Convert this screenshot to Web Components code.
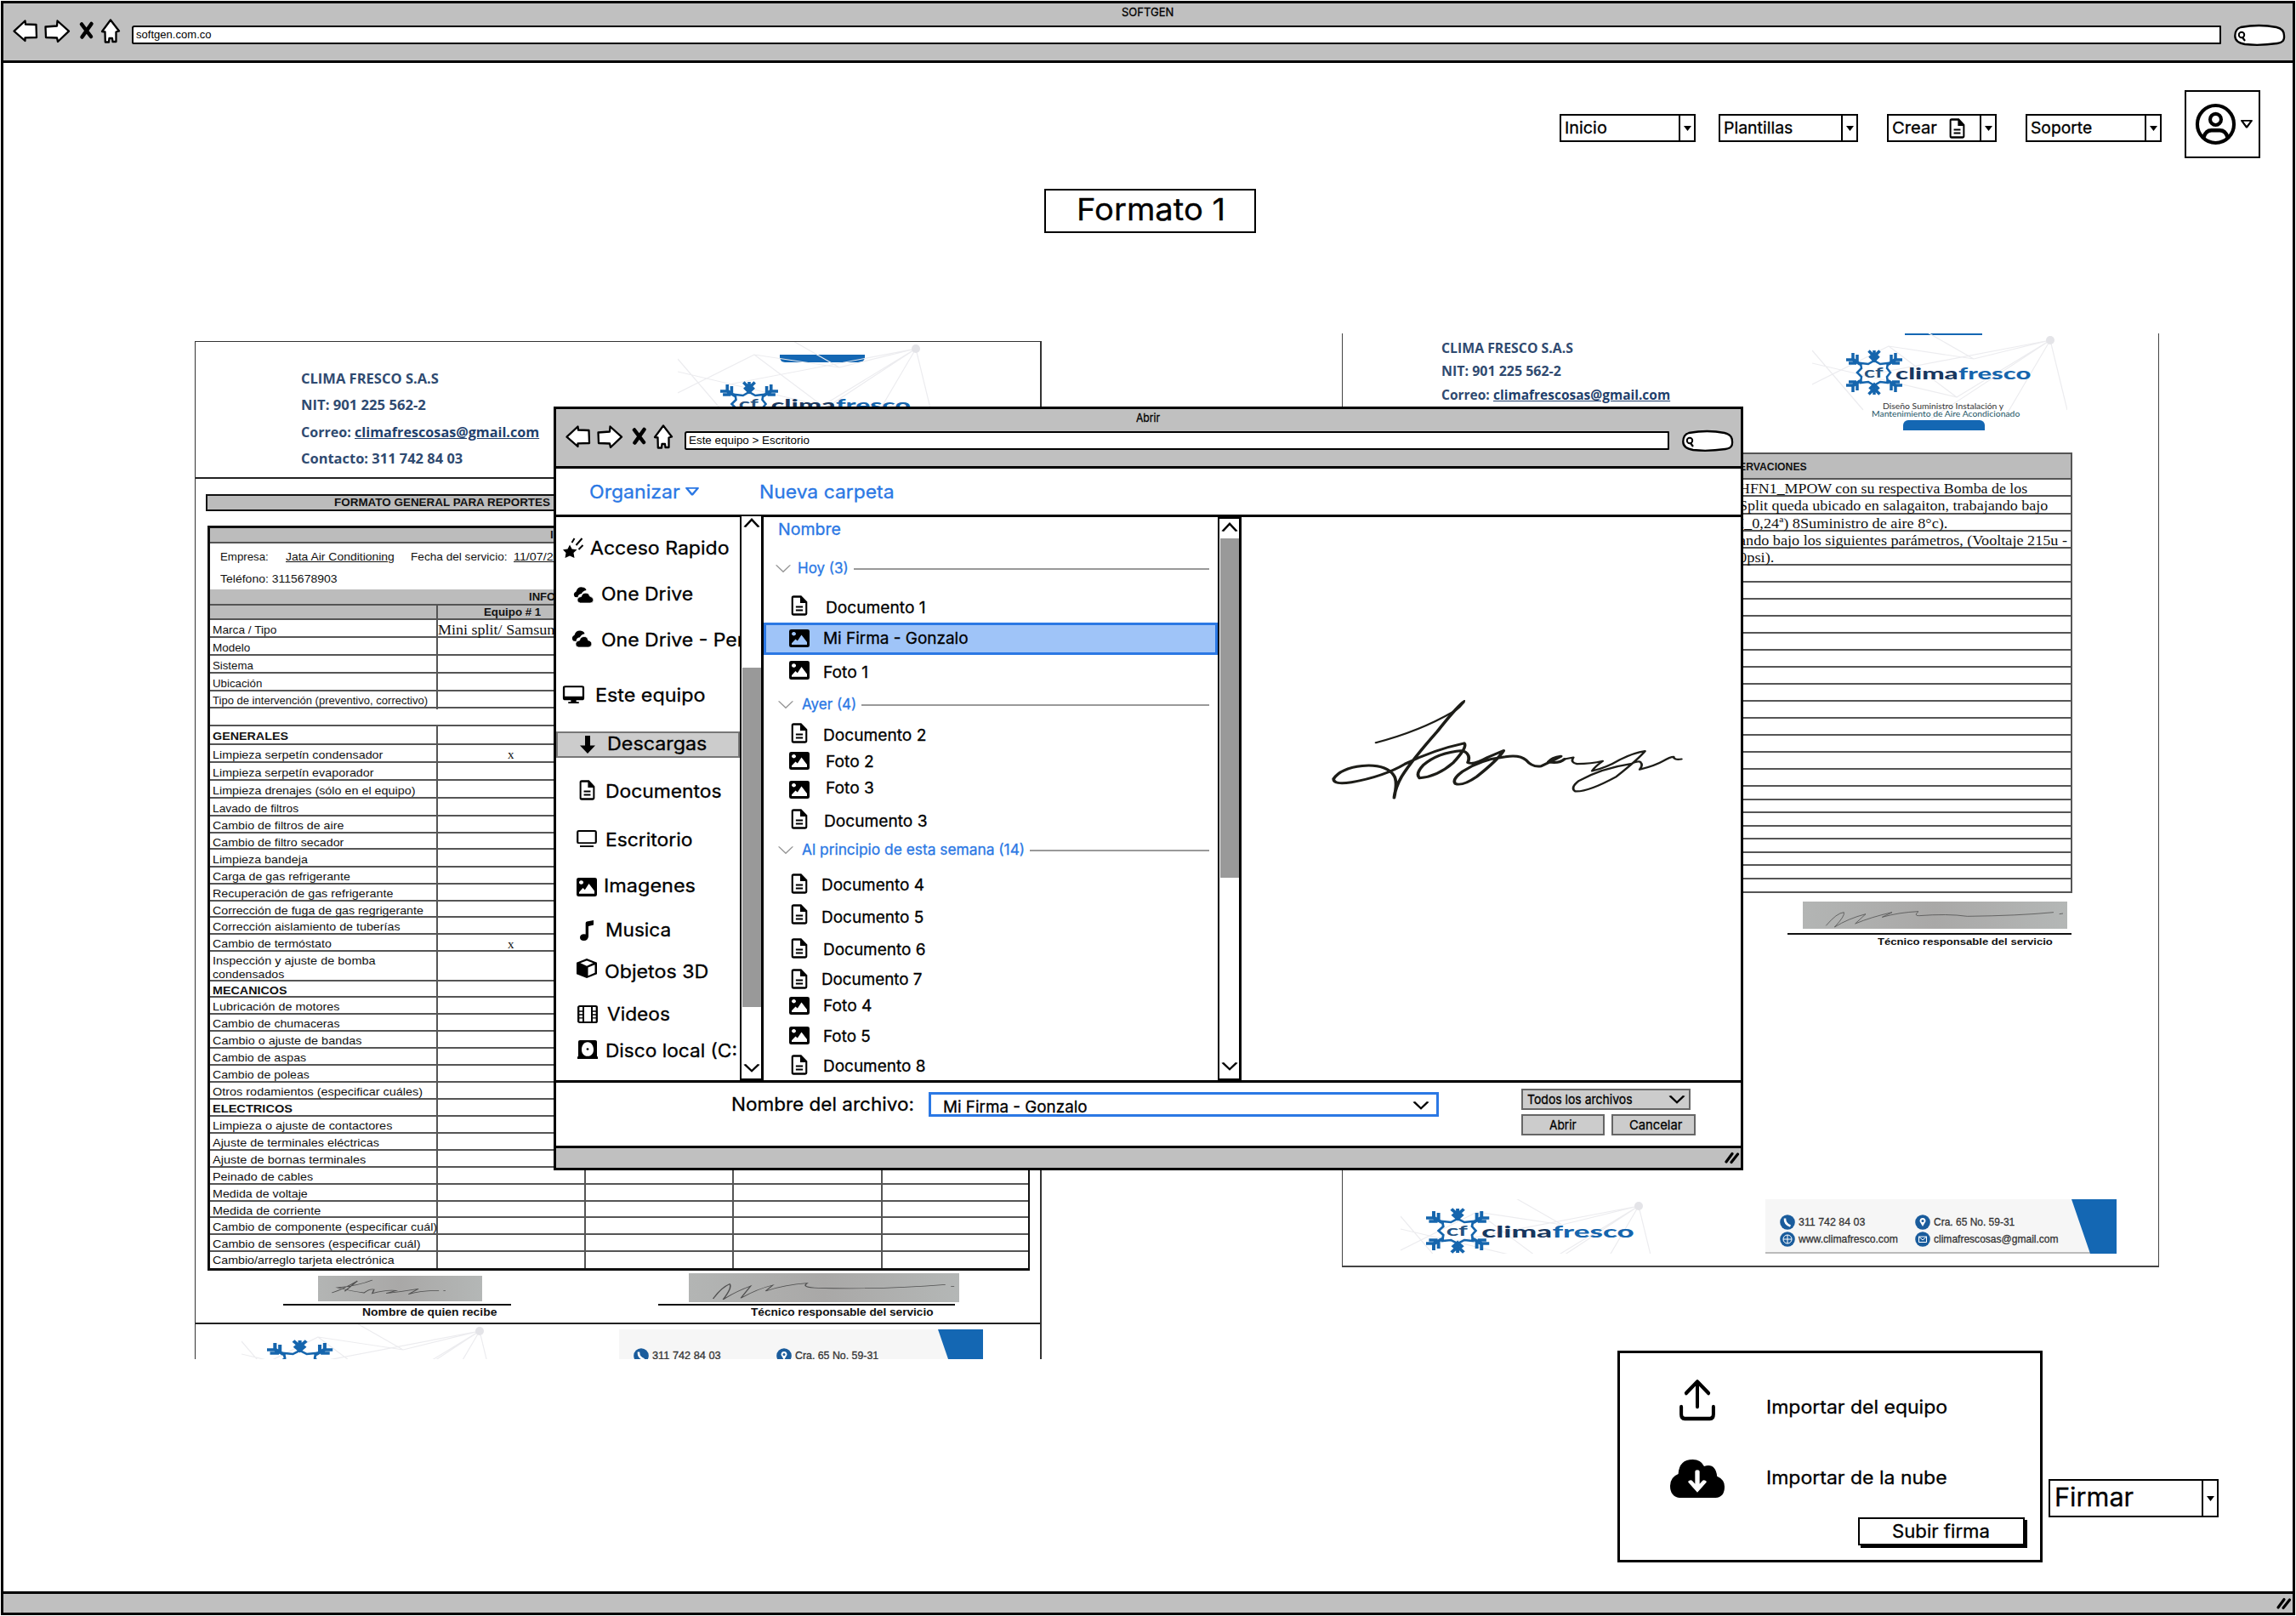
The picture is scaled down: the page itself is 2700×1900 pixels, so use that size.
<!DOCTYPE html>
<html lang="es">
<head>
<meta charset="utf-8">
<title>SOFTGEN</title>
<style>
html,body{margin:0;padding:0;background:#fff}
body{width:2700px;height:1900px;overflow:hidden;color:#000}
</style>
</head>
<body>
<soft-app></soft-app>
<script>
const define = (name, css, html, after) => customElements.define(name, class extends HTMLElement {
  connectedCallback() {
    if (this.shadowRoot) return;
    const root = this.attachShadow({ mode: 'open' });
    root.innerHTML = `<style>*{box-sizing:border-box}svg{display:block;flex:none;overflow:visible}${css}</style>` +
      (typeof html === 'function' ? html(this) : html);
    if (after) after(this, root);
  }
});

/* A single line of text condensed or widened to a given width. */
const FONTS = {
  h: 'Inter,"Noto Sans",sans-serif',
  a: '"Liberation Sans",Arial,sans-serif',
  s: '"Liberation Serif","Times New Roman",serif',
  l: 'Lato,"Open Sans",sans-serif',
  o: '"Open Sans","Noto Sans",sans-serif'
};
define('fit-text',
  `:host{display:block;flex:none;white-space:nowrap;font-feature-settings:"cv11","cv08"}
   span{display:inline-block;transform-origin:0 50%;vertical-align:top}`,
  '<span><slot></slot></span>',
  (el, root) => {
    const g = (k, d) => el.getAttribute(k) || d;
    const h = g('h', 24), f = g('f', 'h');
    el.style.cssText += `;font:${g('b', 400)} ${g('s', 19)}px/${h}px ${FONTS[f]};width:${g('w', 100)}px;height:${h}px`;
    if (f === 'h') el.style.webkitTextStroke = '.3px currentColor';
    const span = root.querySelector('span');
    const real = span.offsetWidth;
    if (real) span.style.transform = `scaleX(${g('w', 100) / real})`;
  });
const T = (t, w, s = 19, o = {}) =>
  `<fit-text w="${w}" s="${s}" ${o.f ? `f="${o.f}"` : ''} ${o.b ? `b="${o.b}"` : ''} ${o.h ? `h="${o.h}"` : ''} style="${o.c || ''}">${t}</fit-text>`;

/* Icons, on a 24 by 24 grid that stretches to the box given. */
const ICONS = {
  doc: '<path d="M4.5 1.5H14L21 8V21.500Q21 22.500 19.500 22.500H4.500Q3 22.500 3 21.500V2.500Q3 1.500 4.500 1.500Z" fill="none" stroke="#000" stroke-width="2.300"/><path d="M13 1V9H21.500Z" fill="#000"/><path d="M7.500 13.500H16.500M7.500 17.500H16.500" stroke="#000" stroke-width="1.800"/>',
  img: '<path fill-rule="evenodd" d="M2.500 0H21.500Q24 0 24 2.500V21.500Q24 24 21.500 24H2.500Q0 24 0 21.500V2.500Q0 0 2.500 0ZM5.500 3.500A2.500 2.500 0 1 0 5.510 3.500ZM3 20.500H21V17L14.500 7.500L9.800 15.500L7.500 13L3 18.500Z"/>',
  star: '<path d="M8 8.500L10.600 13.500L16.500 14.200L12.500 18L13.500 24L8 21.500L2.500 24L3.500 18L0 14.200L5.500 13.500Z"/><path d="M10.500 6L13.500 1M15.500 9L22.500 1M18.500 14L23.500 9" stroke="#000" stroke-width="2" fill="none"/>',
  clouds: '<path d="M2 15Q-1 10 3.500 7Q5 0 10.500 .5Q15 1 15.500 5Q11 6 10 10Q5.500 11 5.500 15.500Z"/><path d="M8.500 24Q4.500 23 5 18.500Q6 14.500 9.500 14.500Q10.500 9 15 9Q19 9 19.500 14Q24 15.500 23.800 19.500Q23.500 24 20 24Z" stroke="#fff" stroke-width=".8"/>',
  monitor: '<path d="M2.500 1.500H21.500Q23 1.500 23 3V17Q23 18.500 21.500 18.500H2.500Q1 18.500 1 17V3Q1 1.500 2.500 1.500Z" fill="none" stroke="#000" stroke-width="2.200"/><path d="M1 14.500H23V18.500H1ZM9 19H15V22H18V24H6V22H9Z"/>',
  down: '<path d="M8 0H16V13H24L12 24L0 13H8Z"/>',
  desktop: '<rect x="1.200" y="1.200" width="21.600" height="17" rx="1.500" fill="none" stroke="#000" stroke-width="2.200"/><path d="M4 22.800H20" stroke="#000" stroke-width="2.200"/>',
  music: '<path d="M10 3.500Q10 2 12 1.500L24 0V5.500L15 7V19Q14 24 7 24Q0 24 0 20Q1 15.500 10 16.500Z"/>',
  cube: '<path d="M12 0L24 5V19L12 24L0 19V5Z"/><path d="M12 2.500L19.500 5.500L12 9L4.500 5.500ZM13.500 11L21.500 7.500V17.500L13.500 21Z" fill="#fff"/>',
  film: '<rect x="1.200" y="1.200" width="21.600" height="21.600" rx="1.500" fill="none" stroke="#000" stroke-width="2.300"/><path d="M7 1V23M17 1V23" stroke="#000" stroke-width="2"/><path d="M1 8H7M1 12.500H7M1 17H7M17 8H23M17 12.500H23M17 17H23" stroke="#000" stroke-width="1.600"/>',
  disk: '<path fill-rule="evenodd" d="M3 0H21Q23 0 23 2V21H24V24H0V21H1V2Q1 0 3 0ZM12 2.500C7.500 2.500 5 7 5 12C5 17 7.500 20.500 12 20.500C16.500 20.500 19 17 19 12C19 7 16.500 2.500 12 2.500Z"/><circle cx="12" cy="11.500" r="1.400"/>',
  user: '<circle cx="12" cy="12" r="11" fill="none" stroke="#000" stroke-width="2.100"/><circle cx="12" cy="9.200" r="3.300" fill="none" stroke="#000" stroke-width="2.100"/><path d="M4.800 19.800Q6 15.600 9.500 15.600H14.500Q18 15.600 19.200 19.800" fill="none" stroke="#000" stroke-width="2.200"/>',
  upload: '<path d="M12 16V1.500M4.500 8L12 1.200L19.500 8M1.200 16V20.500Q1.200 23 3.500 23H20.500Q22.800 23 22.800 20.500V16" fill="none" stroke="#000" stroke-width="2.300" stroke-linecap="round" stroke-linejoin="round"/>',
  cloudDown: '<path d="M4 24Q0 23 0 16.500Q0 11 3.600 9Q4 0 10 0Q13.500 0 15 4.200Q20 2 20.700 10.500Q24 12.500 24 17Q24 23.500 20 24Z"/><path d="M12 7.500V18.500M9 14L12 18.800L15 14" fill="none" stroke="#fff" stroke-width="2" stroke-linecap="round"/>',
  tri: '<path d="M0 0H24L12 24Z"/>',
  triOpen: '<path d="M2 2H22L12 21Z" fill="none" stroke="currentColor" stroke-width="4" stroke-linejoin="round"/>',
  chev: '<path d="M1 1L12 22L23 1" fill="none" stroke="currentColor" stroke-width="var(--k,4)"/>',
  chevUp: '<path d="M1 23L12 2L23 23" fill="none" stroke="currentColor" stroke-width="4"/>'
};
const I = (n, w, h, c = '') => `<svg width="${w}" height="${h}" viewBox="0 0 24 24" preserveAspectRatio="none" style="${c}">${ICONS[n]}</svg>`;
const resize = '<svg width="16" height="13" viewBox="0 0 16 13"><path d="M1 11L8 1.500M7 11.500L14.500 2" stroke="#000" stroke-width="3.200" stroke-linecap="round"/></svg>';

/* Browser-like window frame: title, toolbar, content slot, status bar. */
define('sketch-window',
  `:host{display:flex;flex-direction:column;border:3px solid #000;background:#fff}
   header{height:70px;flex:none;background:#c0c0c0;border-bottom:3px solid #000}
   .title{height:18px;display:flex;justify-content:center;padding-right:1px}
   .bar{height:32px;display:flex;align-items:flex-start;padding:0 9px 0 11px}
   .url{flex:1;height:22px;margin:8px 15px 0 12px;background:#fff;border:2.500px solid #000;border-radius:3px 1px 1px 2px;padding-left:3px}
   .pill{margin-top:7px}
   main{flex:1;min-height:0;position:relative}
   footer{height:var(--foot,25px);flex:none;background:#c0c0c0;border-top:3px solid #000;display:flex;justify-content:flex-end;align-items:center;padding-right:2px}`,
  el => `<header><div class="title">${T(el.getAttribute('name'), el.getAttribute('nw'), 13, { h: 20 })}</div>
   <div class="bar"><svg width="128" height="30" viewBox="0 0 128 30"><g fill="#fff" stroke="#000" stroke-width="2.300" stroke-linejoin="round">
   <path d="M1.500 14.700L14.500 2.500L15 6.500L27.500 7L28 22L14.500 22.300V26Z"/><path d="M38.500 9.500L52 8.500L52.500 2.500L66 14.700L53 27L52 22.500L39 22Z"/>
   <path d="M115 1.500L125 14.500L121.500 15.500V27H117.500L117 23H113.500L113 27.500H108.800L108.500 15.500L105 15Z"/></g><path d="M81 6.500L92 21M92.500 6L81.500 21.500" stroke="#000" stroke-width="4.500" stroke-linecap="round"/></svg>
   <div class="url">${T(el.getAttribute('url'), el.getAttribute('uw'), 13.5, { h: 18, f: 'a' })}</div>
   <svg class="pill" width="60" height="25" viewBox="0 0 60 25"><path d="M8 3Q30 -1 50 3Q59 5 59 13Q60 21 51 22Q30 25 13 23Q1 21 1.300 13Q1.500 5 8 3Z" fill="#fff" stroke="#000" stroke-width="2.300"/><circle cx="9" cy="12" r="3.200" fill="none" stroke="#000" stroke-width="2"/><path d="M10 15L13 19" stroke="#000" stroke-width="2.200"/></svg></div></header>
   <main><slot></slot></main><footer>${resize}</footer>`);

define('combo-box',
  `:host{display:flex;flex:none;border:2px solid #000;border-top-width:2.500px;background:#fff;height:33px}
   .l{flex:1;display:flex;align-items:center;padding-left:var(--pl,4px)}
   .d{width:18px;border-left:2px solid #000;display:flex;align-items:center;justify-content:center}`,
  `<div class="l"><slot></slot></div><div class="d">${I('tri', 9, 6)}</div>`);

/* Company logo: snowflake mark and word mark. */
define('clima-logo',
  `:host{display:flex;height:54px;width:219px;transform-origin:0 0;flex:none}`,
  el => `<svg width="66" height="54" viewBox="0 0 66 54" fill="none" stroke="#1565ad" stroke-width="3.500">
   <g id="h"><path d="M33 13V1M26.500 1.500L33 8L39.500 1.500M27.500 7.500L33 13L38.500 7.500"/></g><use href="#h" transform="translate(0 54) scale(1 -1)"/>
   <g id="q"><path d="M18 18L6 11M0 12H9L16 17M8 4V11M13 6V14M3 16H12"/></g><use href="#q" transform="translate(66 0) scale(-1 1)"/><use href="#q" transform="translate(0 54) scale(1 -1)"/><use href="#q" transform="translate(66 54) scale(-1 -1)"/>
   <path d="M26 17L33 13L40 17L49 16L48 22L52 27L48 32L49 39L40 38L33 42L26 38L17 39L18 32L13 27L18 22L17 16Z" stroke-width="2.500"/></svg>` + (el.hasAttribute('mark') ? '' :
   T('cf', 22, 17, { f: 'l', b: 700, h: 54, c: 'margin-left:-45px;color:#24517f' }) +
   T('clima', 73, 18, { f: 'l', b: 900, h: 56, c: 'margin-left:15px;color:#17375f' }) +
   T('fresco', 86, 18, { f: 'l', b: 900, h: 56, c: 'margin-left:1px;color:#1565ad' })));

/* Contact strip at the foot of each sheet. */
const dot = p => `<svg width="18" height="18" viewBox="0 0 18 18" style="margin:1px 0"><circle cx="9" cy="9" r="8.800" fill="#1a5c9c"/>${p}</svg>`;
const dots = {
  tel: dot('<path d="M6 4.500Q5.500 11 12.500 13.500" stroke="#fff" stroke-width="2.600" fill="none"/>'),
  pin: dot('<path d="M9 14L5.500 8Q5.500 4 9 4Q12.500 4 12.500 8Z" fill="#fff"/><circle cx="9" cy="7.500" r="1.500" fill="#1a5c9c"/>'),
  web: dot('<circle cx="9" cy="9" r="5" fill="none" stroke="#fff" stroke-width="1"/><path d="M4 9H14M9 4V14" stroke="#fff"/>'),
  mail: dot('<path d="M4.500 6H13.500V12.500H4.500ZM4.500 6L9 10L13.500 6" fill="none" stroke="#fff"/>')
};
define('contact-strip',
  `:host{display:flex;justify-content:space-between;background:#f6f6f6;border-bottom:2px solid #bbb;height:64px;flex:none}
   .c{display:grid;grid-template-columns:18px var(--c2,133px) 18px 160px;column-gap:4px;grid-auto-rows:20px;padding:var(--pt,17px) 0 0 var(--pl,17px);align-items:center;width:0}
   fit-text{color:#333;-webkit-text-stroke:.3px #333}`,
  el => {
    const k = +el.getAttribute('k') || 1, o = { f: 'a', h: 22 };
    return `<div class="c">${dots.tel}${T('311 742 84 03', 78 * k, 13.5, o)}${dots.pin}${T('Cra. 65 No. 59-31', 95 * k, 13.5, o)}
    ${el.hasAttribute('short') ? '' : dots.web + T('www.climafresco.com', 117, 13.5, o) + dots.mail + T('climafrescosas@gmail.com', 147, 13.5, o)}</div>
    <svg width="53" height="64" viewBox="0 0 53 64"><path d="M0 0H53V64H22Z" fill="#1467b3"/></svg>`;
  });

/* Faint network pattern behind the logos. */
const web = (x = -40, h = 140) => `<svg width="300" height="${h}" viewBox="0 0 300 ${h}" style="margin:0 0 -${h}px ${x}px;overflow:hidden"><g stroke="#ececef" stroke-width="1.200" fill="none"><path d="M0 60L90 15L170 75L280 8M90 15L190 30L280 8L220 110M190 30L120 -10M280 8L300 90M170 75L0 35M280 8L60 50M280 8L140 100M0 20L60 90"/><circle cx="280" cy="8" r="5" fill="#e4e4e8" stroke="none"/></g></svg>`;
const photo = (x, y, w, h, W, H, path, c) =>
  `<svg width="${W}" height="${H}" viewBox="${x} ${y} ${w} ${h}" preserveAspectRatio="none" style="background:linear-gradient(90deg,#b3b5b4,#a9a8a7 50%,#b4b7b6);${c}"><path d="${path}" fill="none" stroke="#505050" stroke-width="2.400"/></svg>`;

const hdr = { f: 'o', b: 700, h: 20 };
const headLines = t => t.map(([s, w, m, mail]) =>
  `<div style="display:flex;margin-top:${m}px;color:#2f4a70">${T(s, w, 15.5, hdr)}${mail ? T(`<u>climafrescosas@gmail.com</u>`, mail, 15.5, { ...hdr, c: 'margin-left:4px;color:#1f3f6c' }) : ''}</div>`).join('');

/* First sheet: service report. Each row: bottom line, label, label width. */
const ROWS = [
  [750, 'Marca / Tipo', 75], [771, 'Modelo', 44], [792, 'Sistema', 48], [813, 'Ubicación', 58], [833, 'Tipo de intervención (preventivo, correctivo)', 253],
  [854, '', 0], [876, 'GENERALES', 89], [897, 'Limpieza serpetín condensador', 200], [918, 'Limpieza serpetín evaporador', 190],
  [939, 'Limpieza drenajes (sólo en el equipo)', 238], [960, 'Lavado de filtros', 101], [980, 'Cambio de filtros de aire', 154], [999, 'Cambio de filtro secador', 154],
  [1020, 'Limpieza bandeja', 112], [1040, 'Carga de gas refrigerante', 162], [1060, 'Recuperación de gas refrigerante', 212], [1079, 'Corrección de fuga de gas regrigerante', 248],
  [1099, 'Corrección aislamiento de tuberías', 221], [1119, 'Cambio de termóstato', 140], [1154, 'Inspección y ajuste de bomba|condensados', 192], [1173, 'MECANICOS', 88],
  [1193, 'Lubricación de motores', 149], [1213, 'Cambio de chumaceras', 150], [1233, 'Cambio o ajuste de bandas', 175], [1253, 'Cambio de aspas', 110], [1273, 'Cambio de poleas', 114],
  [1293, 'Otros rodamientos (especificar cuáles)', 247], [1313, 'ELECTRICOS', 94], [1333, 'Limpieza o ajuste de contactores', 211], [1353, 'Ajuste de terminales eléctricas', 196],
  [1373, 'Ajuste de bornas terminales', 180], [1393, 'Peinado de cables', 118], [1413, 'Medida de voltaje', 112], [1432, 'Medida de corriente', 127],
  [1452, 'Cambio de componente (especificar cuál)', 264], [1472, 'Cambio de sensores (especificar cuál)', 245], [1491, 'Cambio/arreglo tarjeta electrónica', 214]
];
const A = { f: 'a', h: 20 }, AB = { f: 'a', b: 700, h: 20 };
const tableRows = () => {
  let y = 729;
  return ROWS.map(([end, label, w]) => {
    const h = end - y; y = end;
    if (!label) return `<div class="r" style="height:${h}px"></div>`;
    const up = label === label.toUpperCase();
    const th = h > 30 ? 16 : end === 1491 ? h - 2 : h;
    const txt = label.split('|').map((s, i) => T(s, i ? 84 : w, 13.5, { f: 'a', b: up ? 700 : 400, h: th })).join('');
    const mark = /condensador$|termóstato/.test(label) ? T('x', 8, 15, { f: 's', h }) : '';
    const val = label.startsWith('Marca') ? T('Mini split/ Samsun', 137, 17.5, { f: 's', h, c: 'align-self:flex-start' }) : mark;
    return `<div class="r" style="height:${h}px"><div class="c0${h > 30 ? ' two' : ''}">${txt}</div><div style="${mark ? '' : 'justify-content:flex-start'}">${val}</div><div></div><div></div><div></div></div>`;
  }).join('');
};
define('report-sheet',
  `:host{display:block;background:#fff;border:1px solid #333;border-right-width:2px;border-bottom:0;overflow:hidden;color:#111}
   .head{height:161px;border-bottom:2px solid #222;display:flex}
   .lines{width:617px;padding-left:124px}
   .tab{width:100px;height:9px;background:#1467b3;border-radius:0 0 6px 6px;margin:15px 0 0 70px}
   .bar{margin:18px 0 0 12px;width:970px;height:20px;border:2px solid #111;background:#bcbcbc;padding-left:149px;display:flex;align-items:center}
   .tbl{margin:17px 0 0 14px;width:967px;border:3px solid #111;border-right-width:2px}
   .g{background:#bcbcbc;display:flex;align-items:center}
   .info{display:flex;align-items:center;padding-left:12px}
   .r{display:grid;grid-template-columns:268px 174px 174px 175px 1fr;border-bottom:2px solid #555}
   .r:last-child{border:0}
   .r>div{border-right:2px solid #555;display:flex;justify-content:center;min-width:0}
   .r>div:last-child{border-right:0}
   .r>div>fit-text{margin-top:1px}
   .r>.c0{flex-direction:column;justify-content:flex-start;padding-left:3px}
   .r>.two{padding-top:2px}
   .two>fit-text+fit-text{margin:0}
   .sg{display:flex;flex-direction:column}
   .ft{display:flex;border-top:2px solid #222;height:60px}`,
  `<div class="head"><div class="lines">${headLines([['CLIMA FRESCO S.A.S', 162, 33], ['NIT: 901 225 562-2', 147, 11], ['Correo:', 59, 12, 217], ['Contacto: 311 742 84 03', 190, 11]])}</div>
    <div>${web(-50)}<div class="tab"></div><clima-logo style="margin-top:22px;transform:scaleX(1.030)"></clima-logo></div></div>
   <div class="bar">${T('FORMATO GENERAL PARA REPORTES', 254, 13.5, { ...AB, h: 22 })}</div>
   <div class="tbl"><div class="g" style="height:18px;border-bottom:2px solid #555;padding-left:400px">${T('I', 4, 13.5, AB)}</div>
    <div class="info" style="height:32px">${T('Empresa:', 57, 13.5, A)}${T('<u>Jata Air Conditioning</u>', 128, 13.5, { ...A, c: 'margin-left:20px' })}${T('Fecha del servicio:', 114, 13.5, { ...A, c: 'margin-left:19px' })}${T('<u>11/07/20</u>', 55, 13.5, { ...A, c: 'margin-left:7px' })}</div>
    <div class="info" style="height:22px;padding-bottom:2px">${T('Teléfono: 3115678903', 138, 13.5, A)}</div>
    <div class="g" style="height:19px;border-bottom:2px solid #555;padding-left:375px">${T('INFO', 31, 13.5, AB)}</div>
    <div class="r g" style="height:17px"><div class="c0" style="align-self:stretch"></div><div style="height:15px;padding-left:3px">${T('Equipo # 1', 67, 13.5, { f: 'a', b: 700, h: 14 })}</div><div></div><div></div><div></div></div>
    ${tableRows()}</div>
   <div style="display:flex;height:61px">
    <div class="sg" style="margin-left:103px;width:268px">${photo(237, 720, 296, 90, 193, 30, 'M262 780Q285 765 308 738L285 775M335 735Q310 755 272 762Q300 775 320 780Q330 765 338 768L335 782Q360 768 378 772L360 782Q390 775 418 766L400 785Q425 772 455 772M463 772L467 772', 'margin:6px 0 3px 41px')}
     <div style="height:2px;background:#111"></div>${T('Nombre de quien recibe', 158, 12.5, { ...AB, h: 17, c: 'margin-left:93px' })}</div>
    <div class="sg" style="margin-left:173px;width:349px">${photo(906, 710, 489, 102, 318, 34, 'M950 800Q965 760 980 748Q985 760 968 803Q990 775 1018 755L1000 798Q1030 765 1058 752L1045 773Q1080 750 1120 745Q1108 760 1140 762Q1250 768 1370 750M1380 756L1386 756', 'margin:3px 0 2px 36px')}
     <div style="height:2px;background:#111"></div>${T('Técnico responsable del servicio', 215, 12.5, { ...AB, h: 17, c: 'margin-left:109px' })}</div></div>
   <div class="ft"><div style="width:303px;flex:none;padding-left:84px">${web(-30, 42)}<clima-logo mark style="margin-top:18px;transform:scaleX(1.17)"></clima-logo></div>
    <contact-strip short k="1.030" style="width:428px;margin:6px 0 0 195px;--pt:21px;--c2:142px"></contact-strip></div>`);

/* Second sheet: observations. */
const OBS = [[583, 'HFN1_MPOW con su respectiva Bomba de los', 339], [604, 'Split queda ubicado en salagaiton, trabajando bajo', 363], [624, 'I_0,24ª) 8Suministro de aire 8°c).', 245],
  [644, 'ando bajo los siguientes parámetros, (Vooltaje 215u -', 386], [664, '0psi).', 41],
  684, 704, 724, 744, 764, 784, 804, 824, 844, 864, 884, 904, 924, 940, 955, 971, 986, 1002, 1017, 1033, 1047];
define('notes-sheet',
  `:host{display:block;background:#fff;border:2px solid #444;border-width:0 1px 2px;color:#111}
   .head{height:140px;display:flex}
   .lines{width:592px;padding-left:116px}
   .tbl{margin-left:60px;width:798px;border:2px solid #555}
   .tbl>div{border-bottom:2px solid #555;padding-left:404px}
   .tbl>div:last-child{border:0}`,
  () => {
    let y = 563;
    const rows = OBS.map(r => {
      const [end, t, w] = Array.isArray(r) ? r : [r];
      const h = end - y; y = end;
      return `<div style="height:${h}px">${t ? T(t, w, 17.5, { f: 's', h: 20 }) : ''}</div>`;
    }).join('');
    return `<div class="head"><div class="lines">${headLines([['CLIMA FRESCO S.A.S', 155, 7], ['NIT: 901 225 562-2', 141, 7], ['Correo:', 57, 8, 208]])}</div>
     <div>${web(-40, 100)}<div style="margin-left:69px;width:91px;height:2px;background:#1467b3"></div><clima-logo style="margin-top:17px"></clima-logo>
      ${T('Diseño Suministro Instalación y', 142, 9, { f: 'l', h: 10, c: 'margin:8px 0 0 43px;color:#333' })}${T('Mantenimiento de Aire Acondicionado', 174, 9, { f: 'l', h: 8, c: 'margin-left:30px;color:#256' })}
      <div style="margin:3px 0 0 67px;width:96px;height:12px;background:#1467b3;border-radius:6px 6px 0 0"></div></div></div>
     <div class="tbl"><div style="height:30px;background:#bcbcbc">${T('ERVACIONES', 80, 13, { f: 'a', b: 700, h: 29 })}</div>${rows}</div>
     <div style="margin:10px 0 0 523px;width:334px">${photo(240, 1140, 933, 96, 311, 32, 'M322 1225Q360 1180 385 1178Q390 1190 352 1230Q400 1200 462 1184L425 1218Q480 1195 555 1178L520 1195Q580 1178 648 1175Q630 1190 650 1190Q750 1182 820 1192Q1000 1190 1125 1178M1145 1184L1158 1182', 'margin:0 0 5px 18px')}
      <div style="height:2px;background:#111"></div>${T('Técnico responsable del servicio', 206, 11.5, { f: 'a', b: 700, h: 17, c: 'margin-left:106px' })}</div>
     <div style="display:flex;margin-top:294px"><div style="width:317px;flex:none;padding-left:98px">${web(-30, 64)}<clima-logo style="margin-top:10px;transform:scaleX(1.125)"></clima-logo></div><contact-strip style="width:413px;margin-left:180px"></contact-strip></div>`;
  });

/* Lists whose rows carry an icon and a label.
   Row: icon, x, top, width, height, label, x, centre, width. */
const listRows = (rows, left, top, size) => {
  let y = top;
  return rows.map(([ic, ix, iy, iw, ih, t, tx, tc, tw, kind], i) => {
    const next = rows[i + 1], end = kind === 'sel' ? rows[i].selEnd : (next && next[9] === 'sel') ? rows[i + 1].selTop : tc + 12;
    const row = `<div class="row ${kind || ''}" style="height:${end - y}px">${I(ic, iw, ih, `margin:${iy - y}px 0 0 ${ix - left}px`)}${T(t, tw, kind === 'grp' ? size - 1.5 : size, { c: `margin:${tc - 12 - y}px 0 0 ${tx - ix - iw}px` })}${kind === 'grp' ? `<hr style="margin-top:${tc - y}px">` : ''}</div>`;
    y = end;
    return row;
  }).join('');
};
const SIDE = [
  ['star', 662, 632, 24, 24, 'Acceso Rapido', 694, 644, 163], ['clouds', 674, 690, 24, 19, 'One Drive', 707, 698, 108], ['clouds', 672, 741, 24, 20, 'One Drive - Per', 707, 752, 168],
  ['monitor', 662, 806, 25, 21, 'Este equipo', 700, 817, 129], ['down', 682, 865, 18, 21, 'Descargas', 714, 874, 117, 'sel'], ['doc', 680, 917, 21, 24, 'Documentos', 712, 930, 137],
  ['desktop', 678, 976, 24, 20, 'Escritorio', 712, 987, 102], ['img', 678, 1032, 24, 22, 'Imagenes', 710, 1041, 108], ['music', 682, 1082, 16, 24, 'Musica', 712, 1093, 77],
  ['cube', 678, 1127, 24, 23, 'Objetos 3D', 711, 1142, 122], ['film', 679, 1182, 24, 21, 'Videos', 714, 1192, 74], ['disk', 679, 1223, 24, 22, 'Disco local (C:', 712, 1235, 155]
];
SIDE[4].selTop = 860;
SIDE[4].selEnd = 891;
const FILES = [
  ['chev', 912, 664, 18, 9, 'Hoy (3)', 938, 668, 60, 'grp'], ['doc', 929, 700, 22, 24, 'Documento 1', 971, 714, 118], ['img', 928, 740, 24, 21, 'Mi Firma - Gonzalo', 968, 750, 171, 'sel'],
  ['img', 928, 777, 24, 22, 'Foto 1', 968, 790, 53], ['chev', 915, 824, 18, 9, 'Ayer (4)', 943, 828, 64, 'grp'], ['doc', 929, 850, 22, 24, 'Documento 2', 968, 864, 121],
  ['img', 928, 884, 24, 21, 'Foto 2', 971, 895, 57], ['img', 928, 918, 24, 21, 'Foto 3', 971, 926, 57], ['doc', 929, 951, 22, 24, 'Documento 3', 969, 965, 121],
  ['chev', 915, 995, 18, 9, 'Al principio de esta semana (14)', 943, 999, 262, 'grp'], ['doc', 929, 1027, 22, 24, 'Documento 4', 966, 1040, 121], ['doc', 929, 1063, 22, 24, 'Documento 5', 966, 1078, 120],
  ['doc', 929, 1103, 22, 24, 'Documento 6', 968, 1116, 121], ['doc', 929, 1139, 22, 24, 'Documento 7', 966, 1151, 119], ['img', 928, 1172, 24, 21, 'Foto 4', 968, 1182, 57],
  ['img', 928, 1207, 24, 21, 'Foto 5', 968, 1218, 56], ['doc', 929, 1240, 22, 24, 'Documento 8', 968, 1253, 121]
];
FILES[2].selTop = 732;
FILES[2].selEnd = 770;

define('scroll-track',
  `:host{display:flex;flex-direction:column;align-items:center;flex:none;width:28px;border:2px solid #000;border-width:2px 3px 2px 2px;background:#fff}
   i{display:block;width:22px;background:#999}`,
  el => { const g = k => +el.getAttribute(k); return `${I('chevUp', 18, 10, `margin-top:${g('a')}px;margin-bottom:${g('b')}px`)}<i style="height:${g('t')}px"></i>${I('chev', 18, 9, `margin-top:${g('c')}px`)}`; });

define('file-dialog',
  `:host{display:flex;flex-direction:column;height:100%}
   .tools{height:57px;flex:none;border-bottom:3px solid #000;display:flex;align-items:center;color:#2b78e4;padding-left:39px}
   .body{height:665px;flex:none;border-bottom:3px solid #000;display:flex;align-items:stretch}
   .side{width:216px;overflow:hidden;flex:none}
   .files{width:534px;overflow:hidden;flex:none}
   .row{display:flex;align-items:flex-start}
   .side .sel{background:#ccc;box-shadow:inset 0 0 0 2px #777}
   .files .sel{background:#9fc4f8;box-shadow:inset 0 0 0 3px #2b78e4}
   .grp{color:#2b78e4}.grp svg{color:#999;--k:2.500}
   hr{flex:1;border:0;height:2px;background:#999;margin:0 10px 0 6px}
   .prev{flex:1}
   .foot{flex:1;display:flex;align-items:flex-start;padding-left:206px}
   .inp{display:flex;align-items:center;width:600px;height:29px;border:3px solid #2b78e4;margin:11px 0 0 17px;padding:5px 9px 0 14px;justify-content:space-between}
   .btns{margin:7px 0 0 97px;display:grid;grid-template-columns:98px 99px;column-gap:8px}
   .b{height:25px;border:2px solid #666;background:#ccc;display:flex;align-items:center;justify-content:center}
   .all{grid-column:1/3;width:199px;justify-content:space-between;padding:0 5px;margin-bottom:5px}`,
  `<div class="tools">${T('Organizar', 107, 22)}${I('triOpen', 16, 10, 'margin-left:6px')}${T('Nueva carpeta', 159, 22, { c: 'margin-left:71px' })}</div>
   <div class="body"><div class="side">${listRows(SIDE, 654, 608, 21.5)}</div>
    <scroll-track a="3" b="165" t="399" c="67" style="margin-top:-3px;height:665px"></scroll-track>
    <div class="files"><div style="padding:3px 0 0 17px;height:26px;color:#2b78e4">${T('Nombre', 74, 19)}</div>${listRows(FILES, 898, 634, 18.5)}</div>
    <scroll-track a="5" b="8" t="399" c="217" style="height:662px"></scroll-track>
    <div class="prev"><svg width="421" height="123" viewBox="390 1050 1000 370" preserveAspectRatio="none" style="margin:212px 0 0 104px"><g fill="none" stroke="#1d1d18" stroke-linecap="round" stroke-linejoin="round">
     <path stroke-width="6" d="M518 1210Q640 1170 735 1100Q755 1085 765 1062"/><path stroke-width="9" d="M762 1067Q740 1090 690 1170Q620 1270 590 1330Q572 1370 569 1405Q580 1345 568 1325Q545 1285 480 1292Q420 1300 400 1338Q400 1360 450 1350Q540 1330 600 1285Q680 1235 765 1212Q775 1225 735 1280Q690 1330 640 1335Q628 1320 650 1290Q690 1245 760 1238Q785 1250 775 1280Q790 1290 830 1262L875 1238Q860 1270 800 1330Q760 1365 740 1355Q730 1340 760 1312Q810 1270 880 1260Q920 1252 938 1272Q955 1298 980 1293Q1010 1275 1035 1258Q1010 1262 1000 1278Q1030 1285 1045 1268"/>
     <path stroke-width="6.500" d="M1045 1268L1070 1262Q1060 1280 1080 1285Q1120 1285 1152 1275Q1130 1295 1122 1310Q1160 1300 1200 1270Q1240 1245 1270 1240Q1250 1270 1190 1330Q1110 1385 1075 1382Q1060 1370 1085 1345Q1150 1300 1230 1285Q1255 1272 1258 1280Q1265 1290 1255 1305Q1300 1290 1320 1275Q1340 1260 1350 1260Q1350 1272 1372 1268"/></g></svg></div></div>
   <div class="foot">${T('Nombre del archivo:', 215, 22, { c: 'margin-top:13px' })}<div class="inp">${T('Mi Firma - Gonzalo', 170, 18.5)}${I('chev', 18, 9, 'margin-top:-4px')}</div>
    <div class="btns"><div class="b all">${T('Todos los archivos', 124, 15, { h: 20 })}${I('chev', 18, 9)}</div><div class="b">${T('Abrir', 32, 15, { h: 20 })}</div><div class="b" style="padding-left:4px">${T('Cancelar', 62, 15, { h: 20 })}</div></div></div>`);

define('sign-menu',
  `:host{display:grid;grid-template-columns:172px 1fr;grid-template-rows:50px 83px 1fr;border:3px solid #000;background:#fff}
   .btn{grid-column:1/3;width:196px;height:33px;border:2.500px solid #000;box-shadow:3px 3px 0 #000;margin-left:280px;padding-left:38px;background:#fff}`,
  `${I('upload', 42, 48, 'margin:31px 0 0 70px')}${T('Importar del equipo', 213, 21.5, { c: 'margin-top:51px' })}
   ${I('cloudDown', 64, 45, 'margin:75px 0 0 59px')}${T('Importar de la nube', 213, 21.5, { c: 'margin-top:84px' })}
   <div class="btn" style="margin-top:60px">${T('Subir firma', 115, 21, { h: 29 })}</div>`);

define('soft-app',
  `:host{display:block;width:2700px;height:1900px;padding:1px;position:relative}
   .win{width:2698px;height:1898px}
   nav{display:flex;align-items:center;justify-content:flex-end;padding:32px 38px 0 0}
   nav combo-box{margin-top:9px}
   .user{width:89px;height:80px;border:2.500px solid #000;display:flex;align-items:center;padding-left:11px}
   .t{width:249px;height:52px;border:2.500px solid #000;margin:36px 0 0 1224px;padding-left:36px}
   .float{position:absolute}`,
  `<sketch-window class="win" name="SOFTGEN" nw="61" url="softgen.com.co" uw="89">
    <nav><combo-box style="width:160px;margin-right:27px">${T('Inicio', 50)}</combo-box>
     <combo-box style="width:164px;margin-right:34px">${T('Plantillas', 81)}</combo-box>
     <combo-box style="width:129px;margin-right:34px">${T('Crear', 53)}${I('doc', 21, 24, 'margin-left:13px')}</combo-box>
     <combo-box style="width:160px;margin-right:27px">${T('Soporte', 72)}</combo-box>
     <div class="user">${I('user', 47, 48)}${I('triOpen', 14, 10, 'margin-left:6px')}</div></nav>
    <div class="t">${T('Formato 1', 175, 36, { h: 44 })}</div>
   </sketch-window>
   <report-sheet class="float" style="left:229px;top:401px;width:996px;height:1197px"></report-sheet>
   <notes-sheet class="float" style="left:1578px;top:392px;width:961px;height:1098px"></notes-sheet>
   <sketch-window class="float" style="left:651px;top:478px;width:1399px;height:898px;--foot:26px" name="Abrir" nw="28" url="Este equipo &gt; Escritorio" uw="142"><file-dialog></file-dialog></sketch-window>
   <sign-menu class="float" style="left:1902px;top:1588px;width:500px;height:249px"></sign-menu>
   <combo-box class="float" style="left:2409px;top:1739px;width:200px;height:45px;--pl:5px">${T('Firmar', 93, 30, { h: 40, c: 'margin-bottom:3px' })}</combo-box>`);
</script>
</body>
</html>
